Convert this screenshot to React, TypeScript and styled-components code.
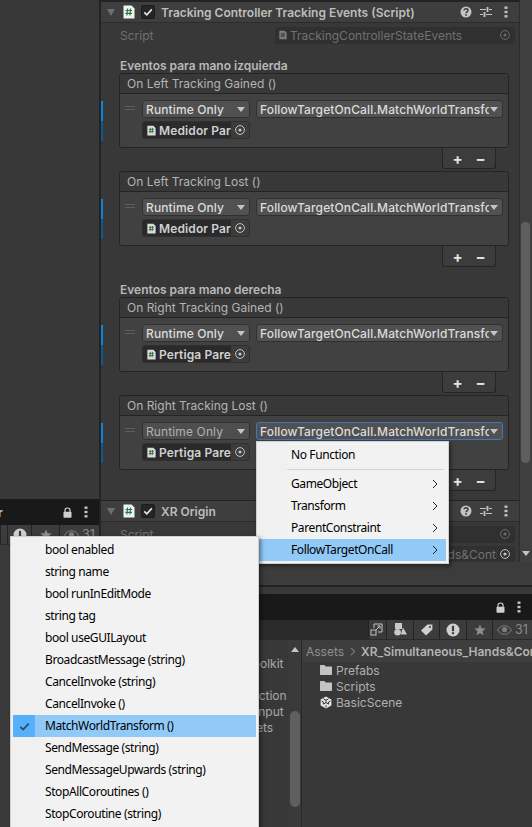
import React from "react";
import styled, { createGlobalStyle } from "styled-components";

const Global = createGlobalStyle`
  html, body { margin: 0; padding: 0; background: #383838; }
  * { box-sizing: border-box; }
`;

const Page = styled.div`
  position: relative;
  width: 532px;
  height: 827px;
  overflow: hidden;
  display: flex;
  background: #383838;
  font-family: Inter, "Liberation Sans", sans-serif;
  font-size: 12px;
  color: #c4c4c4;
`;

/* ---------- left column ---------- */
const LeftColumn = styled.div`
  width: 99px;
  flex: none;
  display: flex;
  flex-direction: column;
`;
const SceneGap = styled.div`
  height: 499px;
  flex: none;
  background: #383838;
`;
const DarkTabBar = styled.div<{ $h: number }>`
  height: ${(p) => p.$h}px;
  flex: none;
  background: #191919;
  display: flex;
  align-items: center;
  justify-content: flex-end;
  overflow: hidden;
`;
const LeftTabText = styled.span`
  margin-right: auto;
  margin-left: -2px;
  color: #c4c4c4;
  font-weight: 600;
`;
const TabIcons = styled.div`
  display: flex;
  align-items: center;
  gap: 12px;
  padding-right: 11px;
`;
const ToolStrip = styled.div<{ $h: number }>`
  height: ${(p) => p.$h}px;
  flex: none;
  display: flex;
  background: #3c3c3c;
  border-bottom: 1px solid #2a2a2a;
`;
const ToolCell = styled.div<{ $w: number }>`
  width: ${(p) => p.$w}px;
  flex: none;
  display: flex;
  align-items: center;
  justify-content: center;
  gap: 3px;
  border-left: 1px solid #232323;
  color: #8c8c8c;
  font-size: 12.5px;
`;
const ToolFill = styled.div`
  flex: 1;
  min-width: 0;
  display: flex;
  justify-content: flex-end;
  background: #2a2a2a;
  border-radius: 0 0 8px 0;
  height: 19px;
  overflow: hidden;
`;
const PopCell = styled.div`
  width: 18px;
  flex: none;
  display: flex;
  align-items: center;
  justify-content: center;
  background: #3a3a3a;
  border-left: 1px solid #232323;
  padding-right: 2px;
`;
const LeftRest = styled.div`
  flex: 1;
  background: #3a3a3a;
`;

/* ---------- right column ---------- */
const RightColumn = styled.div`
  flex: 1;
  min-width: 0;
  display: flex;
  flex-direction: column;
  border-left: 2px solid #232323;
`;
const InspectorArea = styled.div`
  height: 562px;
  flex: none;
  display: flex;
  overflow: hidden;
`;
const Inspector = styled.div`
  width: 419px;
  flex: none;
  background: #383838;
  border-right: 1px solid #2c2c2c;
  border-top: 2px solid #232323;
  overflow: hidden;
`;
const Scrollbar = styled.div`
  flex: 1;
  position: relative;
  background: #3f3f3f;
`;
const ScrollThumb = styled.div`
  position: absolute;
  left: 1px;
  top: 222px;
  width: 9px;
  height: 241px;
  border-radius: 5px;
  background: #5f5f5f;
`;
const ScrollArrow = styled.div`
  position: absolute;
  left: 2px;
  top: 551px;
  width: 0;
  height: 0;
  border-left: 4px solid transparent;
  border-right: 4px solid transparent;
  border-top: 5px solid #c4c4c4;
`;
const ComponentHeader = styled.div`
  height: 21px;
  background: #3e3e3e;
  border-bottom: 1px solid #2c2c2c;
  display: flex;
  align-items: center;
  padding-left: 6px;
`;
const Fold = styled.div`
  width: 0;
  height: 0;
  border-left: 4px solid transparent;
  border-right: 4px solid transparent;
  border-top: 7px solid #6e6e6e;
  margin-right: 8px;
`;
const CheckBox = styled.div`
  width: 14px;
  height: 14px;
  margin: 0 6px 0 6px;
  border-radius: 2px;
  background: #252525;
  border: 1px solid #1c1c1c;
  display: flex;
  align-items: center;
  justify-content: center;
`;
const ComponentTitle = styled.div`
  flex: 1;
  font-weight: 600;
  color: #bdbdbd;
  white-space: nowrap;
`;
const HeaderIcons = styled.div`
  display: flex;
  align-items: center;
  gap: 8px;
  padding-right: 11px;
`;
const DotsSlot = styled.div`
  display: flex;
  margin-left: 4px;
`;
const PropRow = styled.div<{ $top?: number }>`
  height: 16px;
  margin-top: ${(p) => p.$top ?? 4}px;
  display: flex;
  align-items: center;
  padding: 0 4px 0 19px;
  color: #707070;
`;
const PropLabel = styled.div`
  width: 155px;
  flex: none;
`;
const ObjectPreview = styled.div`
  flex: 1;
  min-width: 0;
  height: 17px;
  display: flex;
  align-items: center;
  gap: 3px;
  padding: 0 5px 0 4px;
  border-radius: 3px;
  background: #303030;
  color: #707070;
  white-space: nowrap;
`;
const ObjectText = styled.span`
  flex: 1;
  min-width: 0;
  overflow: hidden;
`;
const SectionLabel = styled.div<{ $top: number }>`
  margin: ${(p) => p.$top}px 0 0 19px;
  height: 15px;
  line-height: 15px;
  font-weight: 600;
  color: #b8b8b8;
`;
const EventBlock = styled.div`
  margin-left: 18px;
  width: 390px;
`;
const EventBox = styled.div`
  position: relative;
  height: 75px;
  border: 1px solid #242424;
  border-radius: 3px;
  background: #414141;
`;
const EventTitle = styled.div`
  height: 20px;
  padding-left: 7px;
  line-height: 19px;
  color: #b4b4b4;
  background: #383838;
  border-bottom: 1px solid #242424;
  border-radius: 3px 3px 0 0;
`;
const EventGrid = styled.div`
  display: grid;
  grid-template-columns: 108px 247px;
  column-gap: 6px;
  row-gap: 3px;
  padding: 6px 0 0 22px;
`;
const Handle = styled.div`
  position: absolute;
  left: 5px;
  top: 32px;
  width: 10px;
  height: 4px;
  border-top: 1px solid #5e5e5e;
  border-bottom: 1px solid #5e5e5e;
`;
const BlueMark = styled.div<{ $dim?: boolean }>`
  width: 2px;
  height: 20px;
  background: ${(p) => (p.$dim ? "#0f5a8c" : "#0a85d8")};
`;
const MarkStack = styled.div`
  position: absolute;
  left: -19px;
  top: 27px;
`;
const Select = styled.div<{ $dim?: boolean; $focus?: boolean }>`
  height: 18px;
  display: flex;
  align-items: center;
  justify-content: space-between;
  padding: 0 3px 0 3px;
  border-radius: 3px;
  background: ${(p) => (p.$dim ? "#4e4e4e" : "#515151")};
  border: 1px solid ${(p) => (p.$focus ? "#3a79bb" : "#303030")};
  color: ${(p) => (p.$dim ? "#b0b0b0" : "#dcdcdc")};
  font-weight: ${(p) => (p.$dim ? 400 : 500)};
  letter-spacing: 0.12px;
  white-space: nowrap;
  overflow: hidden;
`;
const SelectText = styled.span`
  flex: 1;
  min-width: 0;
  overflow: hidden;
`;
const Caret = styled.span`
  flex: none;
  margin-left: 1px;
  margin-right: 1px;
  width: 0;
  height: 0;
  border-left: 4px solid transparent;
  border-right: 4px solid transparent;
  border-top: 5px solid #c4c4c4;
`;
const ObjectField = styled.div`
  height: 18px;
  display: flex;
  align-items: center;
  border-radius: 3px;
  background: #2a2a2a;
  border: 1px solid #303030;
  color: #d0d0d0;
  font-weight: 600;
  letter-spacing: 0.12px;
  white-space: nowrap;
  overflow: hidden;
  padding-left: 4px;
  & > svg:first-child {
    margin-right: 3px;
  }
`;
const ObjectPick = styled.div`
  flex: none;
  width: 18px;
  height: 16px;
  background: #3c3c3c;
  display: flex;
  align-items: center;
  justify-content: center;
`;
const FooterRow = styled.div`
  height: 23px;
  display: flex;
  justify-content: flex-end;
  padding-right: 13px;
`;
const AddRemove = styled.div`
  width: 54px;
  height: 21px;
  display: flex;
  align-items: center;
  justify-content: space-around;
  background: #3c3c3c;
  border: 1px solid #242424;
  border-top: 0;
  border-radius: 0 0 3px 3px;
  color: #e4e4e4;
  font-weight: 700;
  font-size: 15px;
  padding: 0 3px;
`;
const SectionGap = styled.div`
  height: 8px;
  border-bottom: 1px solid #232323;
`;

const Strip = styled.div`
  height: 25px;
  flex: none;
  background: #3c3c3c;
  border-bottom: 2px solid #232323;
`;
const StripGap = styled.div`
  height: 7px;
  flex: none;
  background: #383838;
`;
const BottomBody = styled.div`
  flex: 1;
  min-height: 0;
  display: flex;
  background: #383838;
`;
const TreePane = styled.div`
  width: 187px;
  flex: none;
  overflow: hidden;
  padding-top: 16px;
  color: #a8a8a8;
`;
const TreeRow = styled.div<{ $left: number }>`
  height: 16px;
  line-height: 16px;
  padding-left: ${(p) => p.$left}px;
  white-space: nowrap;
`;
const TreeSpace = styled.div`
  height: 16px;
`;
const TreeBar = styled.div`
  position: relative;
  width: 14px;
  flex: none;
  background: #3a3a3a;
  border-right: 1px solid #282828;
`;
const TreeArrow = styled.div`
  position: absolute;
  left: 3px;
  top: 7px;
  width: 0;
  height: 0;
  border-left: 4px solid transparent;
  border-right: 4px solid transparent;
  border-bottom: 5px solid #c4c4c4;
`;
const TreeThumb = styled.div`
  position: absolute;
  left: 2px;
  top: 71px;
  width: 10px;
  height: 96px;
  border-radius: 5px;
  background: #5f5f5f;
`;
const FilesPane = styled.div`
  flex: 1;
  min-width: 0;
  overflow: hidden;
`;
const Breadcrumb = styled.div`
  height: 22px;
  background: #3e3e3e;
  display: flex;
  align-items: center;
  padding-left: 4px;
  gap: 5.5px;
  white-space: nowrap;
  color: #8f8f8f;
`;
const Crumb = styled.span`
  font-weight: 600;
  color: #b4b4b4;
`;
const FileList = styled.div`
  padding: 0 0 0 18px;
`;
const FileRow = styled.div`
  height: 16px;
  display: flex;
  align-items: center;
  gap: 4px;
  color: #b0b0b0;
`;

/* ---------- popups ---------- */
const Menu = styled.div<{ $x: number; $y: number; $w: number; $h: number; $gut: number }>`
  position: absolute;
  left: ${(p) => p.$x}px;
  top: ${(p) => p.$y}px;
  width: ${(p) => p.$w}px;
  height: ${(p) => p.$h}px;
  padding: 2px;
  border: 1px solid #d0d0d0;
  background: linear-gradient(90deg, #f0f0f0 ${(p) => p.$gut}px, #f2f2f2 ${(p) => p.$gut}px);
  box-shadow: 2px 2px 4px rgba(0, 0, 0, 0.45);
  font-family: "Noto Sans", "Open Sans", sans-serif;
  font-size: 12px;
  color: #000;
`;
const MenuItem = styled.div<{ $hot?: boolean; $pad: number }>`
  position: relative;
  height: 22px;
  line-height: 21px;
  padding-left: ${(p) => p.$pad}px;
  background: ${(p) => (p.$hot ? "#91c9f7" : "transparent")};
  white-space: nowrap;
  letter-spacing: -0.4px;
`;
const MenuCheck = styled.div`
  position: absolute;
  left: 0;
  top: 0;
  width: 22px;
  height: 22px;
  display: flex;
  align-items: center;
  justify-content: center;
  background: #56b0fa;
`;
const MenuChevron = styled.svg`
  position: absolute;
  right: 8px;
  top: 6px;
`;
const MenuSep = styled.div`
  height: 1px;
  margin: 3px 2px 3px 28px;
  background: #d4d4d4;
`;

/* ---------- icons ---------- */
const ScriptIcon = ({ dim, size = 14 }: { dim?: boolean; size?: number }) => (
  <svg width={size - 2} height={size} viewBox="0 0 12 14" style={{ flex: "none" }}>
    <path d="M0.5 0.5H8.5L11.5 3.5V13.5H0.5Z" fill={dim ? "#7d7d7d" : "#f2f2f2"} />
    <path
      d="M4.6 3.5L3.9 10.5M7.6 3.5L6.9 10.5M2.6 5.5H9.2M2.4 8.4H9"
      stroke={dim ? "#3a3a3a" : "#1f7a3a"}
      strokeWidth="1.1"
      fill="none"
    />
  </svg>
);
const SmallScript = () => (
  <svg width="9" height="11" viewBox="0 0 12 14" style={{ flex: "none" }}>
    <path d="M0.5 0.5H8.5L11.5 3.5V13.5H0.5Z" fill="#dcdcdc" />
    <path d="M4.6 3.5L3.9 10.5M7.6 3.5L6.9 10.5M2.6 5.5H9.2M2.4 8.4H9" stroke="#2f6b42" strokeWidth="1.2" fill="none" />
  </svg>
);
const Check = ({ color = "#e8e8e8", w = 10 }: { color?: string; w?: number }) => (
  <svg width={w} height={w} viewBox="0 0 10 10">
    <path d="M1.2 5.4L3.8 7.8L8.8 2.4" stroke={color} strokeWidth="1.6" fill="none" />
  </svg>
);
const Help = () => (
  <svg width="12" height="12" viewBox="0 0 12 12">
    <circle cx="6" cy="6" r="5.5" fill="#c4c4c4" />
    <path d="M4 4.6C4 3.4 4.9 2.8 6 2.8S8 3.5 8 4.5C8 5.9 6 5.8 6 7.3" stroke="#383838" strokeWidth="1.4" fill="none" />
    <rect x="5.2" y="8.2" width="1.6" height="1.6" fill="#383838" />
  </svg>
);
const Sliders = () => (
  <svg width="12" height="12" viewBox="0 0 12 12">
    <path d="M0 3.5H6M9 3.5H12M0 8.5H3M6 8.5H12" stroke="#c4c4c4" strokeWidth="1" />
    <path d="M7.5 1V6M4.5 6V11" stroke="#c4c4c4" strokeWidth="1.8" />
  </svg>
);
const Dots = () => (
  <svg width="4" height="12" viewBox="0 0 4 12">
    <rect x="0.5" y="0.5" width="3" height="2.4" fill="#c4c4c4" />
    <rect x="0.5" y="4.8" width="3" height="2.4" fill="#c4c4c4" />
    <rect x="0.5" y="9.1" width="3" height="2.4" fill="#c4c4c4" />
  </svg>
);
const Target = ({ color = "#c4c4c4" }: { color?: string }) => (
  <svg width="10" height="10" viewBox="0 0 10 10" style={{ flex: "none" }}>
    <circle cx="5" cy="5" r="4.4" stroke={color} strokeWidth="1" fill="none" />
    <circle cx="5" cy="5" r="1.6" fill={color} />
  </svg>
);
const Lock = () => (
  <svg width="9" height="11" viewBox="0 0 9 11">
    <path d="M2 5V3.2C2 1.8 3 1 4.5 1S7 1.8 7 3.2V5" stroke="#d0d0d0" strokeWidth="1.2" fill="none" />
    <rect x="0.5" y="4.8" width="8" height="6" rx="0.8" fill="#d0d0d0" />
  </svg>
);
const Warn = () => (
  <svg width="14" height="14" viewBox="0 0 14 14">
    <circle cx="7" cy="7" r="6.5" fill="#d0d0d0" />
    <rect x="5.9" y="2.8" width="2.2" height="5.4" fill="#3c3c3c" />
    <rect x="5.9" y="9.2" width="2.2" height="2" fill="#3c3c3c" />
  </svg>
);
const Star = () => (
  <svg width="12" height="12" viewBox="0 0 12 12">
    <path d="M6 0.5L7.6 4.3L11.6 4.6L8.6 7.3L9.5 11.3L6 9.2L2.5 11.3L3.4 7.3L0.4 4.6L4.4 4.3Z" fill="#8c8c8c" />
  </svg>
);
const Eye = () => (
  <svg width="15" height="10" viewBox="0 0 15 10">
    <path d="M0.6 5C2.4 2 4.8 0.7 7.5 0.7S12.6 2 14.4 5C12.6 8 10.2 9.3 7.5 9.3S2.4 8 0.6 5Z" stroke="#7c7c7c" fill="none" />
    <circle cx="7.5" cy="4.6" r="2.6" fill="#7c7c7c" />
  </svg>
);
const Shapes = () => (
  <svg width="13" height="13" viewBox="0 0 13 13">
    <rect x="1" y="0" width="7" height="6" fill="#c8c8c8" />
    <circle cx="3.6" cy="9.2" r="3.3" fill="#c8c8c8" />
    <path d="M9 4.4L13 11.4H6.8Z" fill="#c8c8c8" />
  </svg>
);
const Tag = () => (
  <svg width="13" height="12" viewBox="0 0 13 12">
    <path d="M7.4 0.6H12.4V5.4L6 11.6L1 6.6Z" fill="#d0d0d0" />
    <circle cx="10" cy="3" r="1" fill="#3c3c3c" />
  </svg>
);
const PopOut = () => (
  <svg width="13" height="13" viewBox="0 0 13 13">
    <path d="M4 5V1H12V9H8" stroke="#c4c4c4" fill="none" />
    <rect x="1" y="7" width="5" height="5" stroke="#c4c4c4" fill="none" />
    <path d="M6 7L10 3M7.4 3H10V5.6" stroke="#c4c4c4" fill="none" />
  </svg>
);
const Folder = () => (
  <svg width="12" height="10" viewBox="0 0 12 10" style={{ flex: "none" }}>
    <path d="M0 1C0 0.4 0.4 0 1 0H4.4L5.6 1.4H11C11.6 1.4 12 1.8 12 2.4V9C12 9.6 11.6 10 11 10H1C0.4 10 0 9.6 0 9Z" fill="#c4c4c4" />
  </svg>
);
const UnityScene = () => (
  <svg width="12" height="13" viewBox="0 0 12 13" style={{ flex: "none" }}>
    <path d="M6 0.4L11.4 3.4V9.6L6 12.6L0.6 9.6V3.4Z" fill="#e4e4e4" />
    <path d="M3.4 2.8L6 4.2L8.6 2.8M6 4.2V6.6M6 6.6L3.2 8.2M6 6.6L8.8 8.2M6 9.2V11.4M1.6 5L3.4 6V8M10.4 5L8.6 6V8" stroke="#383838" strokeWidth="1" fill="none" />
  </svg>
);
const Chevron = () => (
  <svg width="6" height="9" viewBox="0 0 6 9" style={{ flex: "none" }}>
    <path d="M1 0.8L4.6 4.5L1 8.2" stroke="#7c7c7c" strokeWidth="1.1" fill="none" />
  </svg>
);

/* ---------- composed parts ---------- */
type EventProps = { title: string; object: string; focused?: boolean };

const EventEntry = ({ title, object, focused }: EventProps) => (
  <EventBlock>
    <EventBox>
      <MarkStack>
        <BlueMark />
        <BlueMark $dim />
      </MarkStack>
      <EventTitle>{title}</EventTitle>
      <Handle />
      <EventGrid>
        <Select $dim={focused}>
          <SelectText>Runtime Only</SelectText>
          <Caret />
        </Select>
        <Select $focus={focused}>
          <SelectText>FollowTargetOnCall.MatchWorldTransform</SelectText>
          <Caret />
        </Select>
        <ObjectField>
          <SmallScript />
          <SelectText>{object}</SelectText>
          <ObjectPick>
            <Target />
          </ObjectPick>
        </ObjectField>
      </EventGrid>
    </EventBox>
    <FooterRow>
      <AddRemove>
        <span>+</span>
        <span>−</span>
      </AddRemove>
    </FooterRow>
  </EventBlock>
);

const ComponentBar = ({ title }: { title: string }) => (
  <ComponentHeader>
    <Fold />
    <ScriptIcon />
    <CheckBox>
      <Check />
    </CheckBox>
    <ComponentTitle>{title}</ComponentTitle>
    <HeaderIcons>
      <Help />
      <Sliders />
      <DotsSlot>
        <Dots />
      </DotsSlot>
    </HeaderIcons>
  </ComponentHeader>
);

const methods = [
  "bool enabled",
  "string name",
  "bool runInEditMode",
  "string tag",
  "bool useGUILayout",
  "BroadcastMessage (string)",
  "CancelInvoke (string)",
  "CancelInvoke ()",
  "MatchWorldTransform ()",
  "SendMessage (string)",
  "SendMessageUpwards (string)",
  "StopAllCoroutines ()",
  "StopCoroutine (string)",
];

const MenuArrow = () => (
  <MenuChevron width="6" height="10" viewBox="0 0 6 10">
    <path d="M1 1L5 5L1 9" stroke="#222" strokeWidth="1" fill="none" />
  </MenuChevron>
);

export default function App() {
  return (
    <Page>
      <Global />
      <LeftColumn>
        <SceneGap />
        <DarkTabBar $h={26}>
          <LeftTabText>r</LeftTabText>
          <TabIcons>
            <Lock />
            <Dots />
          </TabIcons>
        </DarkTabBar>
        <ToolStrip $h={20}>
          <ToolCell $w={7} />
          <ToolCell $w={24}>
            <Warn />
          </ToolCell>
          <ToolCell $w={28}>
            <Star />
          </ToolCell>
          <ToolCell $w={40}>
            <Eye />
            31
          </ToolCell>
        </ToolStrip>
        <LeftRest />
      </LeftColumn>

      <RightColumn>
        <InspectorArea>
          <Inspector>
            <ComponentBar title="Tracking Controller Tracking Events (Script)" />
            <PropRow>
              <PropLabel>Script</PropLabel>
              <ObjectPreview>
                <ScriptIcon dim size={10} />
                <ObjectText>TrackingControllerStateEvents</ObjectText>
                <Target color="#6c6c6c" />
              </ObjectPreview>
            </PropRow>
            <SectionLabel $top={15}>Eventos para mano izquierda</SectionLabel>
            <EventEntry title="On Left Tracking Gained ()" object="Medidor Pared" />
            <EventEntry title="On Left Tracking Lost ()" object="Medidor Pared" />
            <SectionLabel $top={13}>Eventos para mano derecha</SectionLabel>
            <EventEntry title="On Right Tracking Gained ()" object="Pertiga Pared" />
            <EventEntry title="On Right Tracking Lost ()" object="Pertiga Pared" focused />
            <SectionGap />
            <ComponentBar title="XR Origin" />
            <PropRow>
              <PropLabel>Script</PropLabel>
              <ObjectPreview>
                <ObjectText />
                <Target color="#6c6c6c" />
              </ObjectPreview>
            </PropRow>
            <PropRow>
              <PropLabel>Origin Base GameObject</PropLabel>
              <ObjectPreview>
                <ObjectText>XR Origin - Simultaneous Hands&amp;Controllers</ObjectText>
                <Target />
              </ObjectPreview>
            </PropRow>
          </Inspector>
          <Scrollbar>
            <ScrollThumb />
            <ScrollArrow />
          </Scrollbar>
        </InspectorArea>
        <Strip />
        <StripGap />
        <DarkTabBar $h={26}>
          <TabIcons>
            <Lock />
            <Dots />
          </TabIcons>
        </DarkTabBar>
        <ToolStrip $h={20}>
          <ToolFill>
            <PopCell>
              <PopOut />
            </PopCell>
          </ToolFill>
          <ToolCell $w={27}>
            <Shapes />
          </ToolCell>
          <ToolCell $w={26}>
            <Tag />
          </ToolCell>
          <ToolCell $w={27}>
            <Warn />
          </ToolCell>
          <ToolCell $w={26}>
            <Star />
          </ToolCell>
          <ToolCell $w={40}>
            <Eye />
            31
          </ToolCell>
        </ToolStrip>
        <BottomBody>
          <TreePane>
            <TreeRow $left={62}>XR Interaction Toolkit</TreeRow>
            <TreeSpace />
            <TreeRow $left={106}>XR Interaction</TreeRow>
            <TreeRow $left={154}>Input</TreeRow>
            <TreeRow $left={134}>Assets</TreeRow>
          </TreePane>
          <TreeBar>
            <TreeArrow />
            <TreeThumb />
          </TreeBar>
          <FilesPane>
            <Breadcrumb>
              <span>Assets</span>
              <Chevron />
              <Crumb>XR_Simultaneous_Hands&amp;Controllers</Crumb>
            </Breadcrumb>
            <FileList>
              <FileRow>
                <Folder />
                Prefabs
              </FileRow>
              <FileRow>
                <Folder />
                Scripts
              </FileRow>
              <FileRow>
                <UnityScene />
                BasicScene
              </FileRow>
            </FileList>
          </FilesPane>
        </BottomBody>
      </RightColumn>

      <Menu $x={256} $y={441} $w={193} $h={123} $gut={30}>
        <MenuItem $pad={32}>No Function</MenuItem>
        <MenuSep />
        <MenuItem $pad={32}>
          GameObject
          <MenuArrow />
        </MenuItem>
        <MenuItem $pad={32}>
          Transform
          <MenuArrow />
        </MenuItem>
        <MenuItem $pad={32}>
          ParentConstraint
          <MenuArrow />
        </MenuItem>
        <MenuItem $pad={32} $hot>
          FollowTargetOnCall
          <MenuArrow />
        </MenuItem>
      </Menu>

      <Menu $x={10} $y={536} $w={249} $h={300} $gut={30}>
        {methods.map((m) => (
          <MenuItem key={m} $pad={32} $hot={m === "MatchWorldTransform ()"}>
            {m === "MatchWorldTransform ()" && (
              <MenuCheck>
                <Check color="#2a4a66" w={11} />
              </MenuCheck>
            )}
            {m}
          </MenuItem>
        ))}
      </Menu>
    </Page>
  );
}
